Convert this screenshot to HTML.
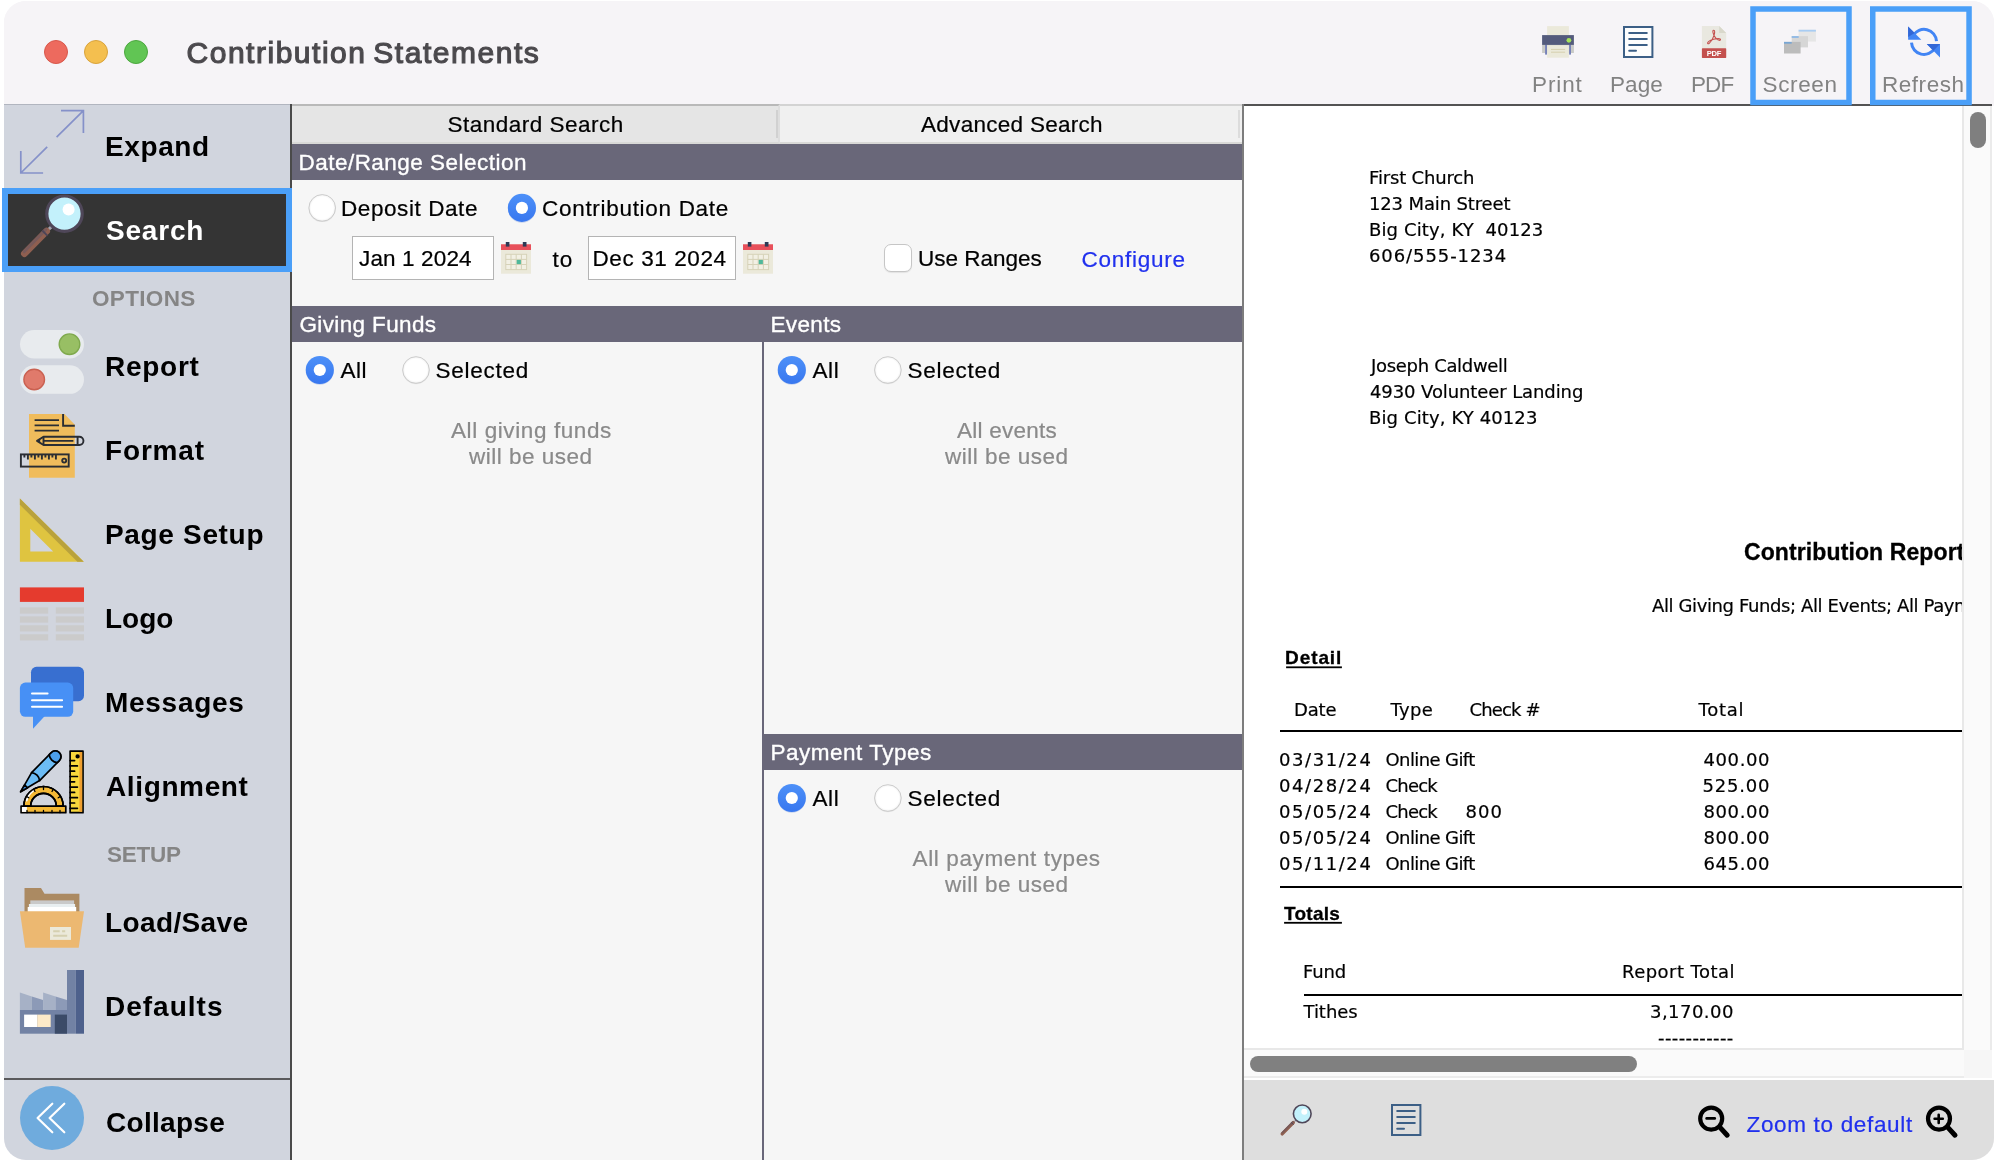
<!DOCTYPE html>
<html lang="en">
<head>
<meta charset="utf-8">
<title>Contribution Statements</title>
<style>
*{box-sizing:border-box;margin:0;padding:0}
html,body{width:1994px;height:1160px;overflow:hidden;background:#fff;font-family:"Liberation Sans",sans-serif}
#win{position:absolute;left:4px;top:1px;width:1990px;height:1159px;border-radius:22px;overflow:hidden;background:#f6f4f7}
#win>div,#win>svg{position:absolute}
.abs{position:absolute}
.t{position:absolute;line-height:1;white-space:nowrap}
/* all coordinates below are page coordinates; #stage shifts them into #win */
#stage{will-change:transform;position:absolute;left:-4px;top:-1px;width:1994px;height:1160px}
#stage>*{position:absolute}
#titlebar{left:0;top:0;width:1994px;height:104px;background:#f6f4f7}
.tl{width:24px;height:24px;border-radius:50%;top:40px}
#sidebar{left:4px;top:104px;width:286px;height:1056px;background:#d1d5de;border-top:1px solid #b1b5bf}
#sbline{left:290px;top:104px;width:2px;height:1056px;background:#4a4a4a}
#sel{left:2px;top:188px;width:290px;height:84px;background:#343434;border:6px solid #4a9ff8}
#sbsep{left:4px;top:1078px;width:286px;height:2px;background:#5a5a5c}
#mid{left:292px;top:104px;width:950px;height:1056px;background:#f6f6f6}
.tab{top:104px;height:40px;border-top:2px solid #b9b9b9;border-bottom:2px solid #d9d9d7}
.hdr{background:#696779;height:36px}
.vline{background:#696779;width:2px}
.inp{background:#fff;border:1.5px solid #b4b4b4;height:44px;top:236px}
#pvline{left:1242px;top:104px;width:2px;height:1056px;background:#7d7d7d}
#pv{left:1244px;top:104px;width:718px;height:944px;background:#fff}
#pvtop{left:1244px;top:104px;width:748px;height:2px;background:#535353}
#vtrack{left:1962px;top:106px;width:30px;height:944px;background:#fafafa;border-left:2px solid #e8e8e8;border-right:2px solid #ebebeb;z-index:5}
#vthumb{left:1970px;top:112px;width:16px;height:36px;border-radius:8px;background:#7f7f7f;z-index:6}
#htrack{left:1244px;top:1048px;width:720px;height:30px;background:#fafafa;border-top:2px solid #e8e8e8;border-bottom:2px solid #ececec;z-index:5}
#hthumb{left:1250px;top:1056px;width:387px;height:16px;border-radius:8px;background:#808080;z-index:6}
#corner{left:1964px;top:1050px;width:28px;height:28px;background:#f6f6f6;z-index:6}
#rstrip{left:1992px;top:106px;width:2px;height:974px;background:#fff;z-index:6}
#gap{left:1244px;top:1078px;width:750px;height:2px;background:#fff;z-index:5}
#bbar{left:1244px;top:1080px;width:750px;height:80px;background:#dedede}
.rule{background:#000;height:2px}
</style>
</head>
<body>
<div class="abs" style="left:2px;top:188px;width:4px;height:84px;background:#4a9ff8"></div>
<div id="win"><div id="stage">
<!-- ================= TITLE BAR ================= -->
<div id="titlebar"></div>
<div class="tl" style="left:44px;background:#ed6a5e;border:1px solid #d8574b"></div>
<div class="tl" style="left:84px;background:#f4bf4f;border:1px solid #d9a33c"></div>
<div class="tl" style="left:124px;background:#61c554;border:1px solid #4ca73f"></div>


<!-- ================= SIDEBAR ================= -->
<div id="sidebar"></div>
<div id="sbline"></div>
<div id="sel"></div>
<div id="sbsep"></div>


<!-- ================= MIDDLE PANEL ================= -->
<div id="mid"></div>
<div class="tab" style="left:292px;width:488px;background:#e5e5e5;border-right:2px solid #dedede"></div>
<div class="tab" style="left:780px;width:462px;background:#f0f0f0;border-top-color:#d3d3d3"></div>
<div class="abs" style="left:1238px;top:110px;width:2px;height:28px;background:#dcdcdc"></div>
<div class="abs" style="left:776px;top:110px;width:2px;height:28px;background:#d1d1d1"></div>
<div class="hdr" style="left:292px;top:144px;width:950px"></div>
<div class="hdr" style="left:292px;top:306px;width:950px"></div>
<div class="hdr" style="left:764px;top:734px;width:478px"></div>
<div class="vline" style="left:762px;top:342px;height:818px"></div>
<div class="inp" style="left:352px;width:142px"></div>
<div class="inp" style="left:588px;width:148px"></div>
<div class="abs" style="left:884px;top:244px;width:28px;height:28px;border-radius:7px;background:#fff;border:1px solid #c6c6c6;box-shadow:0 1px 1px rgba(0,0,0,.08)"></div>


<!-- ================= PREVIEW ================= -->
<div id="pv"></div>
<div id="pvline"></div>
<div id="pvtop"></div>
<div class="rule" style="left:1280px;top:730px;width:682px"></div>
<div class="rule" style="left:1280px;top:886px;width:682px"></div>
<div class="rule" style="left:1303.5px;top:994px;width:659px"></div>
<div id="vtrack"></div><div id="vthumb"></div>
<div id="htrack"></div><div id="hthumb"></div>
<div id="corner"></div><div id="rstrip"></div><div id="gap"></div>
<div id="bbar"></div>
<svg id="icons" width="1994" height="1160" viewBox="0 0 1994 1160" style="left:0;top:0;z-index:3">
<defs>
  <g id="mag"><!-- magnifier in 64x64 box -->
    <path d="M32.6 31.6 L26.6 37.4" stroke="#a3a3ad" stroke-width="3" stroke-linecap="butt"/>
    <path d="M26.6 37.2 L4.4 59.7" stroke="#8f5f50" stroke-width="6.800" stroke-linecap="round"/>
    <path d="M26.9 36.9 L5.4 58.8" stroke="#785a5a" stroke-width="3" stroke-linecap="round" transform="translate(-1.2,-1.2)"/>
    <path d="M22.3 36.5 L27.3 41.6" stroke="#4d4558" stroke-width="1.900"/>
    <circle cx="44.500" cy="19.700" r="17.700" fill="#c3f1fb" stroke="#4f4759" stroke-width="3.200"/>
    <circle cx="48.6" cy="15.5" r="6" fill="#fff"/>
  </g>
  <g id="pageico"><!-- page icon in 32x32 box, origin at top-left -->
    <rect x="1" y="1" width="28.4" height="30" fill="none" stroke="#3c5f86" stroke-width="2"/>
    <path d="M6.2 7.1H23.8M6.2 12.9H23.8M6.2 18.9H23.8M6.2 24.7H13" stroke="#3c5f86" stroke-width="2" stroke-linecap="round"/>
  </g>
  <g id="cal"><!-- calendar 30x32, origin top-left at (0,0) => page (501,242) -->
    <rect x="0" y="2.3" width="30" height="29.4" fill="#ebe9da"/>
    <rect x="0" y="2.3" width="30" height="5.7" fill="#e8505b"/>
    <rect x="4.8" y="0" width="3.6" height="4.6" fill="#2d3a55"/>
    <rect x="21.8" y="0" width="3.7" height="4.6" fill="#2d3a55"/>
    <rect x="4.8" y="12.3" width="20.8" height="15.3" fill="#f2f0e4" stroke="#d6d2b8" stroke-width="1"/>
    <path d="M10 12.3V27.6M15.2 12.3V27.6M20.4 12.3V27.6M4.8 17.4H25.6M4.8 22.5H25.6" stroke="#d6d2b8" stroke-width="1"/>
    <rect x="15.7" y="17.9" width="4.2" height="4.2" fill="#4fb89a"/>
  </g>
  <linearGradient id="rb" x1="0" y1="0" x2="0" y2="1"><stop offset="0" stop-color="#4d90f8"/><stop offset="1" stop-color="#3877ef"/></linearGradient>
  <radialGradient id="ru" cx="0.5" cy="0.5" r="0.5"><stop offset="0.82" stop-color="#fff"/><stop offset="1" stop-color="#f1f1f1"/></radialGradient>
  <g id="r0"><circle cx="0" cy="0.700" r="13.500" fill="#000" opacity="0.070"/><circle cx="0" cy="0" r="13.300" fill="url(#ru)" stroke="#c2c2c2" stroke-width="0.800"/></g>
  <g id="r1"><circle cx="0" cy="1" r="13.800" fill="#2f66d8" opacity="0.250"/><circle cx="0" cy="0" r="14.100" fill="url(#rb)"/><circle cx="0" cy="0" r="6.100" fill="#fff"/></g>
</defs>

<!-- ===== toolbar: highlighted buttons ===== -->
<rect x="1753" y="9" width="96" height="93.5" fill="none" stroke="#4a9ff8" stroke-width="5.5"/>
<rect x="1872.750" y="9" width="96.300" height="93.500" fill="none" stroke="#4a9ff8" stroke-width="5.500"/>
<!-- ===== toolbar: printer ===== -->
<g>
  <rect x="1547.1" y="26.1" width="21.8" height="9.4" fill="#ebe9da"/>
  <rect x="1542.1" y="44.5" width="31.8" height="8.5" fill="#c9cac6"/>
  <rect x="1545.1" y="44.5" width="1.9" height="10.1" fill="#7681b8"/>
  <rect x="1569.1" y="44.5" width="1.9" height="10.1" fill="#7681b8"/>
  <rect x="1542.1" y="35.1" width="31.8" height="9.8" fill="#545b7c"/>
  <circle cx="1568.9" cy="40.3" r="2.4" fill="#a4e35a"/>
  <rect x="1547.1" y="45.2" width="21.8" height="12.5" fill="#ebe9da"/>
  <path d="M1551 49.4H1565.1M1551 52.2H1565.1" stroke="#d5cfae" stroke-width="1"/>
</g>
<!-- ===== toolbar: page ===== -->
<g transform="translate(1623,26)"><rect x="1" y="1" width="28.4" height="30" fill="#fdfdfd"/><use href="#pageico"/></g>
<!-- ===== toolbar: pdf ===== -->
<g>
  <path d="M1701.9 26.1H1719.2L1726.2 33.1V57.9H1701.9Z" fill="#e9e8e0"/>
  <path d="M1719.2 26.1V33.1H1726.2Z" fill="#d9d8cb"/>
  <rect x="1701.9" y="48.3" width="24.3" height="9.6" rx="0.6" fill="#c4504e"/>
  <text x="1714.05" y="56.3" font-family="Liberation Sans, sans-serif" font-weight="700" font-size="7.6" fill="#fff" text-anchor="middle" textLength="14.8">PDF</text>
  <g fill="none" stroke="#c4504e" stroke-width="1.1" stroke-linecap="round" stroke-linejoin="round">
    <path d="M1713.7 30.2c1.3 0 1.2 2.4.3 5.2-.9 3-2.700 6.2-4.8 8-.9.8-1.900.3-1.500-.7.5-1.200 2.700-2.500 5.900-3.400 2.800-.800 5.600-1.100 6.500-.300.800.700.200 1.500-.900 1.300-2.300-.400-5.300-3.700-6.100-7.300-.4-1.800-.3-2.800.6-2.800z"/>
  </g>
</g>
<!-- ===== toolbar: screen ===== -->
<g>
  <rect x="1798.6" y="29.8" width="17.3" height="11.8" fill="#e6e6e6"/>
  <rect x="1798.6" y="29.8" width="17.3" height="1.8" fill="#a9cdf3"/>
  <rect x="1791.7" y="36.1" width="16.3" height="11.3" fill="#d6d6d6"/>
  <rect x="1791.7" y="36.1" width="7" height="1.8" fill="#8eb8e6"/>
  <rect x="1784" y="41.9" width="16.6" height="11.6" fill="#bcbcbc"/>
  <rect x="1784" y="41.9" width="7.7" height="1.8" fill="#78a6d4"/>
</g>
<!-- ===== toolbar: refresh ===== -->
<g>
  <path d="M1913.2 35.6A12.5 12.5 0 0 1 1936.5 41.2" fill="none" stroke="#4285f4" stroke-width="3"/>
  <path d="M1934.8 48.2A12.5 12.5 0 0 1 1911.5 42.6" fill="none" stroke="#4285f4" stroke-width="3"/>
  <path d="M1908.1 26.5V39.7H1921.3Z" fill="#4285f4"/>
  <path d="M1908.1 26.5V37L1914.7 33.1Z" fill="#3367d6"/>
  <path d="M1940 57.4V44.1H1926.8Z" fill="#4285f4"/>
  <path d="M1926.8 44.1H1940L1933.4 50.8Z" fill="#3367d6"/>
</g>

<!-- ===== sidebar: expand ===== -->
<g fill="none" stroke="#8591c9" stroke-width="1.7">
  <path d="M61 110.6H83.4V133M83.4 110.6L56.6 137.2"/>
  <path d="M20.8 150.9V173H43.1M20.8 173L47.2 146.8"/>
</g>
<!-- ===== sidebar: search ===== -->
<use href="#mag" transform="translate(20,194)"/>
<!-- ===== sidebar: report (toggles) ===== -->
<g>
  <rect x="20" y="330" width="64" height="28.5" rx="14.25" fill="#e8ebee"/>
  <circle cx="69.5" cy="344.2" r="10.3" fill="#98bf64" stroke="#7fa94d" stroke-width="1.4"/>
  <rect x="20" y="365.3" width="64" height="28.5" rx="14.25" fill="#e8ebee"/>
  <circle cx="34.2" cy="379.5" r="10.3" fill="#e07a6b" stroke="#ca6151" stroke-width="1.4"/>
</g>
<!-- ===== sidebar: format ===== -->
<g>
  <path d="M29 413.9H64.5L74.8 424.7V477.8H29Z" fill="#f0bc5c"/>
  <g fill="none" stroke="#2a2d33" stroke-width="1.9">
    <path d="M63.1 413.9V425.8H74.8"/>
    <path d="M34.6 420.1H59M34.6 425.4H59M34.6 430.6H59"/>
    <path d="M43.5 436.7H79.3A4.15 4.15 0 0 1 79.3 445H43.5L37 440.85Z" stroke-linejoin="round"/>
    <path d="M43.5 436.7V445M43.5 440.85H73.4M77.6 436.7V445"/>
    <path d="M37 440.85L40.2 438.8V442.9Z" fill="#2a2d33" stroke="none"/>
    <rect x="20.9" y="454.4" width="47.8" height="12.2"/>
    <path d="M24.4 454.4V457.5M27.9 454.4V459.5M31.4 454.4V457.5M34.9 454.4V459.5M38.4 454.4V457.5M41.9 454.4V459.5M45.4 454.4V457.5M48.9 454.4V459.5M52.4 454.4V457.5M55.9 454.4V459.5"/>
    <circle cx="64.2" cy="460.6" r="2"/>
  </g>
</g>
<!-- ===== sidebar: page setup (set square) ===== -->
<g>
  <path d="M19.9 498.5V561.7H83.8Z M30.3 528.8L53.2 551.6H30.3Z" fill="#dfc440" fill-rule="evenodd"/>
  <path d="M19.9 498.5L83.8 561.7H77.4L19.9 504.8Z" fill="#b9a23c"/>
</g>
<!-- ===== sidebar: logo ===== -->
<g>
  <rect x="19.9" y="587.4" width="64.1" height="14.5" fill="#e53b2e"/>
  <g fill="#cbcbcb">
    <rect x="19.9" y="607.4" width="28.3" height="6.2"/><rect x="55.8" y="607.4" width="28.2" height="6.2"/>
    <rect x="19.9" y="616.4" width="28.3" height="6.2"/><rect x="55.8" y="616.4" width="28.2" height="6.2"/>
    <rect x="19.9" y="625.3" width="28.3" height="6.2"/><rect x="55.8" y="625.3" width="28.2" height="6.2"/>
    <rect x="19.9" y="634.3" width="28.3" height="6.2"/><rect x="55.8" y="634.3" width="28.2" height="6.2"/>
  </g>
</g>
<!-- ===== sidebar: messages ===== -->
<g>
  <rect x="31" y="666.8" width="53" height="34.4" rx="5.5" fill="#386fd0"/>
  <rect x="19.9" y="682.6" width="53.3" height="34.2" rx="5.5" fill="#4790f5"/>
  <path d="M33 716H44.8L33 728.8Z" fill="#4790f5"/>
  <path d="M32 693.6H47.6M32 700.2H62.1M32 706.8H62.1" stroke="#fff" stroke-width="2" stroke-linecap="round"/>
</g>
<!-- ===== sidebar: alignment ===== -->
<g stroke="#000" stroke-width="1.7" stroke-linejoin="round" stroke-linecap="round">
  <rect x="70.1" y="751.1" width="12.9" height="61.6" fill="#f8d83c"/>
  <rect x="79.4" y="752" width="2.8" height="59.8" fill="#f0a030" stroke="none"/>
  <circle cx="77.6" cy="756.4" r="1.3" fill="#000"/>
  <path d="M70.1 760.6H74.6M70.1 765.9H77.4M70.1 771.2H74.6M70.1 776.5H77.4M70.1 781.8H74.6M70.1 787.1H77.4M70.1 792.4H74.6M70.1 797.7H77.4M70.1 803H74.6M70.1 808.3H77.4" fill="none"/>
  <!-- pencil -->
  <path d="M20.6 791.8L31.6 772.6L51.3 752.6A5.6 5.6 0 0 1 59.300 752.600A5.600 5.600 0 0 1 59.300 760.600L39.600 780.600Z" fill="#6cbcf5"/>
  <path d="M49.2 754.700L51.300 752.600A5.600 5.600 0 0 1 59.300 752.600A5.600 5.600 0 0 1 59.300 760.600L57.200 762.700A9 9 0 0 1 49.200 754.700Z" fill="#4c9eea"/>
  <path d="M31.6 772.600A9 9 0 0 1 39.600 780.600" fill="none"/>
  <path d="M20.6 791.800L24.600 784.800L27.600 787.800Z" fill="#3b8ee0"/>
  <!-- protractor -->
  <path d="M23.8 806.200A19.700 19.700 0 0 1 63.200 806.200H56.300A12.800 12.800 0 0 0 30.700 806.200Z" fill="#f5b935"/>
  <rect x="21.100" y="806.200" width="44.700" height="6.500" fill="#f5b935"/>
  <path d="M21.9 807h5v4.900h-5Z" fill="#fff" stroke="none"/>
  <path d="M26.600 800.500A17.500 17.500 0 0 1 33.500 790.500" fill="none" stroke="#fff" stroke-width="2"/>
  <path d="M23.8 806.200A19.700 19.700 0 0 1 63.200 806.200M56.300 806.200A12.800 12.800 0 0 0 30.700 806.200" fill="none"/>
  <path d="M43.500 786.500V789.500M33.600 789.200L35 791.500M53.400 789.200L52 791.500M26.400 796.400L28.800 797.800M60.600 796.400L58.200 797.800" fill="none" stroke-width="1.300"/>
  <path d="M27 812.700V810.500M35 812.700V810.500M43.500 812.700V810.500M52 812.700V810.500M60 812.700V810.500" fill="none" stroke-width="1.300"/>
</g>
<!-- ===== sidebar: load/save ===== -->
<g>
  <path d="M24.500 888.100H41L44.500 893.700H79.400V912H24.500Z" fill="#ab8a62"/>
  <rect x="30.300" y="900.400" width="43.800" height="5" fill="#c9c9c9"/>
  <rect x="28.900" y="904" width="46.200" height="5" fill="#e8eef0"/>
  <rect x="27.700" y="907" width="48.500" height="5" fill="#fff"/>
  <path d="M19.900 911.200H84L78.700 947.700H25.200Z" fill="#ecb871"/>
  <rect x="50" y="927" width="21" height="12.900" fill="#ebe9da"/>
  <path d="M53.200 931.200H59.700M62.100 931.200H65.200M53.200 935.700H67.200" stroke="#d5d0b0" stroke-width="2"/>
</g>
<!-- ===== sidebar: defaults (factory) ===== -->
<g>
  <rect x="67" y="970" width="8.800" height="63.700" fill="#7282a4"/>
  <rect x="75.800" y="970" width="8.200" height="63.700" fill="#4e618c"/>
  <path d="M19.900 992.600L31.800 996.400V1010H19.900Z" fill="#a6b1c6"/>
  <path d="M31.800 996.400L43.100 1000.100V1010H31.800Z" fill="#8c9ab7"/>
  <path d="M43.100 992.600L55.500 996.500V1010H43.100Z" fill="#a6b1c6"/>
  <path d="M55.500 996.500L67 1000.100V1010H55.500Z" fill="#8c9ab7"/>
  <rect x="19.900" y="1010" width="47.100" height="23.700" fill="#7282a4"/>
  <rect x="24.100" y="1014.600" width="13.100" height="12.400" fill="#fff"/>
  <rect x="37.200" y="1014.600" width="13.500" height="12.400" fill="#fdeac8"/>
  <rect x="54.800" y="1014.600" width="12.200" height="19.100" fill="#3b4b68"/>
</g>
<!-- ===== sidebar: collapse ===== -->
<g>
  <circle cx="52" cy="1118" r="32" fill="#6fabdd"/>
  <path d="M52.300 1103.700L37.600 1118L52.300 1132.300M64.300 1103.700L49.600 1118L64.300 1132.300" fill="none" stroke="#fff" stroke-width="2.200" stroke-linecap="round" stroke-linejoin="round"/>
</g>

<!-- ===== radios ===== -->
<use href="#r0" x="322.200" y="207.900"/><use href="#r1" x="521.900" y="207.900"/>
<use href="#r1" x="319.800" y="370"/><use href="#r0" x="416" y="370"/>
<use href="#r1" x="791.800" y="370"/><use href="#r0" x="887.900" y="370"/>
<use href="#r1" x="791.800" y="798"/><use href="#r0" x="887.900" y="798"/>
<!-- ===== calendars ===== -->
<use href="#cal" transform="translate(501,242)"/>
<use href="#cal" transform="translate(743,242)"/>

<!-- ===== underlines of report section headings ===== -->
<rect x="1286.100" y="666.400" width="55.800" height="1.800" fill="#000"/>
<rect x="1284.100" y="921.900" width="57.800" height="1.800" fill="#000"/>
<!-- ===== bottom bar ===== -->
<use href="#mag" transform="translate(1280,1104) scale(0.5)"/>
<g transform="translate(1391,1104)"><use href="#pageico"/></g>
<g fill="none" stroke="#000" stroke-linecap="round">
  <circle cx="1711.200" cy="1118.600" r="11" stroke-width="4.200"/>
  <path d="M1720 1127.400L1727.200 1135.200" stroke-width="5"/>
  <path d="M1706.600 1118.400H1714.800" stroke-width="2.600"/>
  <circle cx="1939" cy="1118.600" r="11" stroke-width="4.200"/>
  <path d="M1947.800 1127.400L1955 1135.200" stroke-width="5"/>
  <path d="M1934.600 1118.800H1942.800M1938.700 1114.700V1122.900" stroke-width="2.600"/>
</g>
</svg>


<!-- ================= TEXT ================= -->
<span class="t" style='left:186.50px;top:38.00px;font-size:30px;font-weight:400;color:#4b494d;font-family:"Liberation Sans", sans-serif;letter-spacing:1.518px;word-spacing:-3px;-webkit-text-stroke:1.15px #4b494d;'>Contribution Statements</span>
<span class="t" style='left:1532.00px;top:74.00px;font-size:22.5px;font-weight:400;color:#828282;font-family:"Liberation Sans", sans-serif;letter-spacing:0.900px;'>Print</span>
<span class="t" style='left:1610.00px;top:74.00px;font-size:22.5px;font-weight:400;color:#828282;font-family:"Liberation Sans", sans-serif;letter-spacing:0.067px;'>Page</span>
<span class="t" style='left:1691.00px;top:74.00px;font-size:22.5px;font-weight:400;color:#828282;font-family:"Liberation Sans", sans-serif;letter-spacing:-0.900px;'>PDF</span>
<span class="t" style='left:1762.50px;top:74.00px;font-size:22.5px;font-weight:400;color:#828282;font-family:"Liberation Sans", sans-serif;letter-spacing:0.640px;'>Screen</span>
<span class="t" style='left:1882.00px;top:74.00px;font-size:22.5px;font-weight:400;color:#828282;font-family:"Liberation Sans", sans-serif;letter-spacing:0.533px;'>Refresh</span>
<span class="t" style='left:105.00px;top:133.00px;font-size:28px;font-weight:700;color:#000;font-family:"Liberation Sans", sans-serif;letter-spacing:0.600px;'>Expand</span>
<span class="t" style='left:106.00px;top:217.00px;font-size:28px;font-weight:700;color:#fff;font-family:"Liberation Sans", sans-serif;letter-spacing:0.800px;'>Search</span>
<span class="t" style='left:92.00px;top:288.00px;font-size:22.5px;font-weight:700;color:#858585;font-family:"Liberation Sans", sans-serif;letter-spacing:0.333px;'>OPTIONS</span>
<span class="t" style='left:105.00px;top:353.00px;font-size:28px;font-weight:700;color:#000;font-family:"Liberation Sans", sans-serif;letter-spacing:0.720px;'>Report</span>
<span class="t" style='left:105.00px;top:437.00px;font-size:28px;font-weight:700;color:#000;font-family:"Liberation Sans", sans-serif;letter-spacing:0.840px;'>Format</span>
<span class="t" style='left:105.00px;top:521.00px;font-size:28px;font-weight:700;color:#000;font-family:"Liberation Sans", sans-serif;letter-spacing:0.667px;'>Page Setup</span>
<span class="t" style='left:105.00px;top:605.00px;font-size:28px;font-weight:700;color:#000;font-family:"Liberation Sans", sans-serif;'>Logo</span>
<span class="t" style='left:105.00px;top:689.00px;font-size:28px;font-weight:700;color:#000;font-family:"Liberation Sans", sans-serif;letter-spacing:0.714px;'>Messages</span>
<span class="t" style='left:106.00px;top:773.00px;font-size:28px;font-weight:700;color:#000;font-family:"Liberation Sans", sans-serif;letter-spacing:0.625px;'>Alignment</span>
<span class="t" style='left:107.00px;top:844.00px;font-size:22.5px;font-weight:700;color:#858585;font-family:"Liberation Sans", sans-serif;letter-spacing:-0.250px;'>SETUP</span>
<span class="t" style='left:105.00px;top:909.00px;font-size:28px;font-weight:700;color:#000;font-family:"Liberation Sans", sans-serif;letter-spacing:0.375px;'>Load/Save</span>
<span class="t" style='left:105.00px;top:993.00px;font-size:28px;font-weight:700;color:#000;font-family:"Liberation Sans", sans-serif;letter-spacing:1.000px;'>Defaults</span>
<span class="t" style='left:106.00px;top:1109.00px;font-size:28px;font-weight:700;color:#000;font-family:"Liberation Sans", sans-serif;letter-spacing:0.286px;'>Collapse</span>
<span class="t" style='left:447.50px;top:114.00px;font-size:22.5px;font-weight:400;color:#000;font-family:"Liberation Sans", sans-serif;letter-spacing:0.500px;-webkit-text-stroke:0.22px currentColor;'>Standard Search</span>
<span class="t" style='left:921.00px;top:114.00px;font-size:22.5px;font-weight:400;color:#000;font-family:"Liberation Sans", sans-serif;letter-spacing:0.286px;-webkit-text-stroke:0.22px currentColor;'>Advanced Search</span>
<span class="t" style='left:298.50px;top:152.00px;font-size:22.5px;font-weight:400;color:#fff;font-family:"Liberation Sans", sans-serif;letter-spacing:0.474px;-webkit-text-stroke:0.35px #fff;'>Date/Range Selection</span>
<span class="t" style='left:341.00px;top:198.00px;font-size:22.5px;font-weight:400;color:#000;font-family:"Liberation Sans", sans-serif;letter-spacing:0.582px;-webkit-text-stroke:0.22px currentColor;'>Deposit Date</span>
<span class="t" style='left:542.00px;top:198.00px;font-size:22.5px;font-weight:400;color:#000;font-family:"Liberation Sans", sans-serif;letter-spacing:0.700px;-webkit-text-stroke:0.22px currentColor;'>Contribution Date</span>
<span class="t" style='left:359.00px;top:248.00px;font-size:22.5px;font-weight:400;color:#000;font-family:"Liberation Sans", sans-serif;letter-spacing:0.133px;-webkit-text-stroke:0.22px currentColor;'>Jan 1 2024</span>
<span class="t" style='left:552.50px;top:249.00px;font-size:22.5px;font-weight:400;color:#000;font-family:"Liberation Sans", sans-serif;letter-spacing:1.000px;-webkit-text-stroke:0.22px currentColor;'>to</span>
<span class="t" style='left:592.50px;top:248.00px;font-size:22.5px;font-weight:400;color:#000;font-family:"Liberation Sans", sans-serif;letter-spacing:0.600px;-webkit-text-stroke:0.22px currentColor;'>Dec 31 2024</span>
<span class="t" style='left:918.00px;top:248.00px;font-size:22.5px;font-weight:400;color:#000;font-family:"Liberation Sans", sans-serif;-webkit-text-stroke:0.22px currentColor;'>Use Ranges</span>
<span class="t" style='left:1081.50px;top:249.00px;font-size:22.5px;font-weight:400;color:#2030ee;font-family:"Liberation Sans", sans-serif;letter-spacing:0.750px;-webkit-text-stroke:0.22px currentColor;'>Configure</span>
<span class="t" style='left:299.50px;top:314.00px;font-size:22.5px;font-weight:400;color:#fff;font-family:"Liberation Sans", sans-serif;letter-spacing:0.364px;-webkit-text-stroke:0.35px #fff;'>Giving Funds</span>
<span class="t" style='left:770.50px;top:314.00px;font-size:22.5px;font-weight:400;color:#fff;font-family:"Liberation Sans", sans-serif;letter-spacing:0.360px;-webkit-text-stroke:0.35px #fff;'>Events</span>
<span class="t" style='left:770.50px;top:742.00px;font-size:22.5px;font-weight:400;color:#fff;font-family:"Liberation Sans", sans-serif;letter-spacing:0.500px;-webkit-text-stroke:0.35px #fff;'>Payment Types</span>
<span class="t" style='left:340.50px;top:360.00px;font-size:22.5px;font-weight:400;color:#000;font-family:"Liberation Sans", sans-serif;letter-spacing:0.500px;-webkit-text-stroke:0.22px currentColor;'>All</span>
<span class="t" style='left:435.50px;top:360.00px;font-size:22.5px;font-weight:400;color:#000;font-family:"Liberation Sans", sans-serif;letter-spacing:0.743px;-webkit-text-stroke:0.22px currentColor;'>Selected</span>
<span class="t" style='left:812.50px;top:360.00px;font-size:22.5px;font-weight:400;color:#000;font-family:"Liberation Sans", sans-serif;letter-spacing:0.600px;-webkit-text-stroke:0.22px currentColor;'>All</span>
<span class="t" style='left:907.50px;top:360.00px;font-size:22.5px;font-weight:400;color:#000;font-family:"Liberation Sans", sans-serif;letter-spacing:0.743px;-webkit-text-stroke:0.22px currentColor;'>Selected</span>
<span class="t" style='left:812.50px;top:788.00px;font-size:22.5px;font-weight:400;color:#000;font-family:"Liberation Sans", sans-serif;letter-spacing:0.600px;-webkit-text-stroke:0.22px currentColor;'>All</span>
<span class="t" style='left:907.50px;top:788.00px;font-size:22.5px;font-weight:400;color:#000;font-family:"Liberation Sans", sans-serif;letter-spacing:0.743px;-webkit-text-stroke:0.22px currentColor;'>Selected</span>
<span class="t" style='left:451.00px;top:420.00px;font-size:22.5px;font-weight:400;color:#8a8a8a;font-family:"Liberation Sans", sans-serif;letter-spacing:0.600px;-webkit-text-stroke:0.22px currentColor;'>All giving funds</span>
<span class="t" style='left:469.00px;top:446.00px;font-size:22.5px;font-weight:400;color:#8a8a8a;font-family:"Liberation Sans", sans-serif;letter-spacing:0.491px;-webkit-text-stroke:0.22px currentColor;'>will be used</span>
<span class="t" style='left:957.00px;top:420.00px;font-size:22.5px;font-weight:400;color:#8a8a8a;font-family:"Liberation Sans", sans-serif;letter-spacing:0.244px;-webkit-text-stroke:0.22px currentColor;'>All events</span>
<span class="t" style='left:945.00px;top:446.00px;font-size:22.5px;font-weight:400;color:#8a8a8a;font-family:"Liberation Sans", sans-serif;letter-spacing:0.491px;-webkit-text-stroke:0.22px currentColor;'>will be used</span>
<span class="t" style='left:912.50px;top:848.00px;font-size:22.5px;font-weight:400;color:#8a8a8a;font-family:"Liberation Sans", sans-serif;letter-spacing:0.625px;-webkit-text-stroke:0.22px currentColor;'>All payment types</span>
<span class="t" style='left:945.00px;top:874.00px;font-size:22.5px;font-weight:400;color:#8a8a8a;font-family:"Liberation Sans", sans-serif;letter-spacing:0.491px;-webkit-text-stroke:0.22px currentColor;'>will be used</span>
<span class="t" style='left:1369.00px;top:169.00px;font-size:18px;font-weight:400;color:#000;font-family:"DejaVu Sans", "Liberation Sans", sans-serif;letter-spacing:-0.164px;-webkit-text-stroke:0.2px currentColor;'>First Church</span>
<span class="t" style='left:1369.00px;top:195.00px;font-size:18px;font-weight:400;color:#000;font-family:"DejaVu Sans", "Liberation Sans", sans-serif;letter-spacing:-0.143px;-webkit-text-stroke:0.2px currentColor;'>123 Main Street</span>
<span class="t" style='left:1369.00px;top:221.00px;font-size:18px;font-weight:400;color:#000;font-family:"DejaVu Sans", "Liberation Sans", sans-serif;letter-spacing:0.122px;white-space:pre;-webkit-text-stroke:0.2px currentColor;'>Big City, KY  40123</span>
<span class="t" style='left:1369.00px;top:247.00px;font-size:18px;font-weight:400;color:#000;font-family:"DejaVu Sans", "Liberation Sans", sans-serif;letter-spacing:0.909px;-webkit-text-stroke:0.2px currentColor;'>606/555-1234</span>
<span class="t" style='left:1371.00px;top:357.00px;font-size:18px;font-weight:400;color:#000;font-family:"DejaVu Sans", "Liberation Sans", sans-serif;letter-spacing:-0.314px;-webkit-text-stroke:0.2px currentColor;'>Joseph Caldwell</span>
<span class="t" style='left:1370.00px;top:383.00px;font-size:18px;font-weight:400;color:#000;font-family:"DejaVu Sans", "Liberation Sans", sans-serif;letter-spacing:-0.095px;-webkit-text-stroke:0.2px currentColor;'>4930 Volunteer Landing</span>
<span class="t" style='left:1369.00px;top:409.00px;font-size:18px;font-weight:400;color:#000;font-family:"DejaVu Sans", "Liberation Sans", sans-serif;letter-spacing:0.118px;-webkit-text-stroke:0.2px currentColor;'>Big City, KY 40123</span>
<span class="t" style='left:1285.00px;top:648.00px;font-size:19px;font-weight:700;color:#000;font-family:"Liberation Sans", sans-serif;letter-spacing:0.920px;-webkit-text-stroke:0.3px #000;'>Detail</span>
<span class="t" style='left:1294.00px;top:701.00px;font-size:18px;font-weight:400;color:#000;font-family:"DejaVu Sans", "Liberation Sans", sans-serif;letter-spacing:-0.133px;-webkit-text-stroke:0.2px currentColor;'>Date</span>
<span class="t" style='left:1390.50px;top:701.00px;font-size:18px;font-weight:400;color:#000;font-family:"DejaVu Sans", "Liberation Sans", sans-serif;letter-spacing:0.333px;-webkit-text-stroke:0.2px currentColor;'>Type</span>
<span class="t" style='left:1469.50px;top:701.00px;font-size:18px;font-weight:400;color:#000;font-family:"DejaVu Sans", "Liberation Sans", sans-serif;letter-spacing:-0.833px;-webkit-text-stroke:0.2px currentColor;'>Check #</span>
<span class="t" style='left:1698.50px;top:701.00px;font-size:18px;font-weight:400;color:#000;font-family:"DejaVu Sans", "Liberation Sans", sans-serif;letter-spacing:0.750px;-webkit-text-stroke:0.2px currentColor;'>Total</span>
<span class="t" style='left:1279.00px;top:751.00px;font-size:18px;font-weight:400;color:#000;font-family:"DejaVu Sans", "Liberation Sans", sans-serif;letter-spacing:1.571px;-webkit-text-stroke:0.2px currentColor;'>03/31/24</span>
<span class="t" style='left:1385.50px;top:751.00px;font-size:18px;font-weight:400;color:#000;font-family:"DejaVu Sans", "Liberation Sans", sans-serif;letter-spacing:-0.600px;-webkit-text-stroke:0.2px currentColor;'>Online Gift</span>
<span class="t" style='left:1703.50px;top:751.00px;font-size:18px;font-weight:400;color:#000;font-family:"DejaVu Sans", "Liberation Sans", sans-serif;letter-spacing:0.600px;-webkit-text-stroke:0.2px currentColor;'>400.00</span>
<span class="t" style='left:1279.00px;top:777.00px;font-size:18px;font-weight:400;color:#000;font-family:"DejaVu Sans", "Liberation Sans", sans-serif;letter-spacing:1.571px;-webkit-text-stroke:0.2px currentColor;'>04/28/24</span>
<span class="t" style='left:1385.50px;top:777.00px;font-size:18px;font-weight:400;color:#000;font-family:"DejaVu Sans", "Liberation Sans", sans-serif;letter-spacing:-0.800px;-webkit-text-stroke:0.2px currentColor;'>Check</span>
<span class="t" style='left:1702.50px;top:777.00px;font-size:18px;font-weight:400;color:#000;font-family:"DejaVu Sans", "Liberation Sans", sans-serif;letter-spacing:0.800px;-webkit-text-stroke:0.2px currentColor;'>525.00</span>
<span class="t" style='left:1279.00px;top:803.00px;font-size:18px;font-weight:400;color:#000;font-family:"DejaVu Sans", "Liberation Sans", sans-serif;letter-spacing:1.571px;-webkit-text-stroke:0.2px currentColor;'>05/05/24</span>
<span class="t" style='left:1385.50px;top:803.00px;font-size:18px;font-weight:400;color:#000;font-family:"DejaVu Sans", "Liberation Sans", sans-serif;letter-spacing:-0.800px;-webkit-text-stroke:0.2px currentColor;'>Check</span>
<span class="t" style='left:1465.50px;top:803.00px;font-size:18px;font-weight:400;color:#000;font-family:"DejaVu Sans", "Liberation Sans", sans-serif;letter-spacing:1.000px;-webkit-text-stroke:0.2px currentColor;'>800</span>
<span class="t" style='left:1703.50px;top:803.00px;font-size:18px;font-weight:400;color:#000;font-family:"DejaVu Sans", "Liberation Sans", sans-serif;letter-spacing:0.600px;-webkit-text-stroke:0.2px currentColor;'>800.00</span>
<span class="t" style='left:1279.00px;top:829.00px;font-size:18px;font-weight:400;color:#000;font-family:"DejaVu Sans", "Liberation Sans", sans-serif;letter-spacing:1.571px;-webkit-text-stroke:0.2px currentColor;'>05/05/24</span>
<span class="t" style='left:1385.50px;top:829.00px;font-size:18px;font-weight:400;color:#000;font-family:"DejaVu Sans", "Liberation Sans", sans-serif;letter-spacing:-0.600px;-webkit-text-stroke:0.2px currentColor;'>Online Gift</span>
<span class="t" style='left:1703.50px;top:829.00px;font-size:18px;font-weight:400;color:#000;font-family:"DejaVu Sans", "Liberation Sans", sans-serif;letter-spacing:0.600px;-webkit-text-stroke:0.2px currentColor;'>800.00</span>
<span class="t" style='left:1279.00px;top:855.00px;font-size:18px;font-weight:400;color:#000;font-family:"DejaVu Sans", "Liberation Sans", sans-serif;letter-spacing:1.571px;-webkit-text-stroke:0.2px currentColor;'>05/11/24</span>
<span class="t" style='left:1385.50px;top:855.00px;font-size:18px;font-weight:400;color:#000;font-family:"DejaVu Sans", "Liberation Sans", sans-serif;letter-spacing:-0.600px;-webkit-text-stroke:0.2px currentColor;'>Online Gift</span>
<span class="t" style='left:1703.50px;top:855.00px;font-size:18px;font-weight:400;color:#000;font-family:"DejaVu Sans", "Liberation Sans", sans-serif;letter-spacing:0.600px;-webkit-text-stroke:0.2px currentColor;'>645.00</span>
<span class="t" style='left:1284.00px;top:904.00px;font-size:19px;font-weight:700;color:#000;font-family:"Liberation Sans", sans-serif;letter-spacing:0.280px;-webkit-text-stroke:0.3px #000;'>Totals</span>
<span class="t" style='left:1303.00px;top:963.00px;font-size:18px;font-weight:400;color:#000;font-family:"DejaVu Sans", "Liberation Sans", sans-serif;letter-spacing:-0.133px;-webkit-text-stroke:0.2px currentColor;'>Fund</span>
<span class="t" style='left:1622.00px;top:963.00px;font-size:18px;font-weight:400;color:#000;font-family:"DejaVu Sans", "Liberation Sans", sans-serif;letter-spacing:0.455px;-webkit-text-stroke:0.2px currentColor;'>Report Total</span>
<span class="t" style='left:1303.50px;top:1003.00px;font-size:18px;font-weight:400;color:#000;font-family:"DejaVu Sans", "Liberation Sans", sans-serif;letter-spacing:-0.040px;-webkit-text-stroke:0.2px currentColor;'>Tithes</span>
<span class="t" style='left:1650.00px;top:1003.00px;font-size:18px;font-weight:400;color:#000;font-family:"DejaVu Sans", "Liberation Sans", sans-serif;letter-spacing:0.457px;-webkit-text-stroke:0.2px currentColor;'>3,170.00</span>
<span class="t" style='left:1658.00px;top:1029.00px;font-size:18px;font-weight:400;color:#000;font-family:"DejaVu Sans", "Liberation Sans", sans-serif;letter-spacing:0.380px;-webkit-text-stroke:0.2px currentColor;'>-----------</span>
<span class="t" style='left:1746.50px;top:1114.00px;font-size:22.5px;font-weight:400;color:#2030ee;font-family:"Liberation Sans", sans-serif;letter-spacing:0.671px;-webkit-text-stroke:0.22px currentColor;'>Zoom to default</span>
<span class="t" style='left:1744.00px;top:541.00px;font-size:23px;font-weight:700;color:#000;font-family:"Liberation Sans", sans-serif;letter-spacing:0.106px;white-space:pre;-webkit-text-stroke:0.3px #000;'>Contribution Report</span>
<span class="t" style='left:1652.00px;top:597.00px;font-size:18px;font-weight:400;color:#000;font-family:"DejaVu Sans", "Liberation Sans", sans-serif;letter-spacing:-0.389px;white-space:pre;-webkit-text-stroke:0.2px currentColor;'>All Giving Funds; All Events; All Paym</span>
</div></div>
</body>
</html>
